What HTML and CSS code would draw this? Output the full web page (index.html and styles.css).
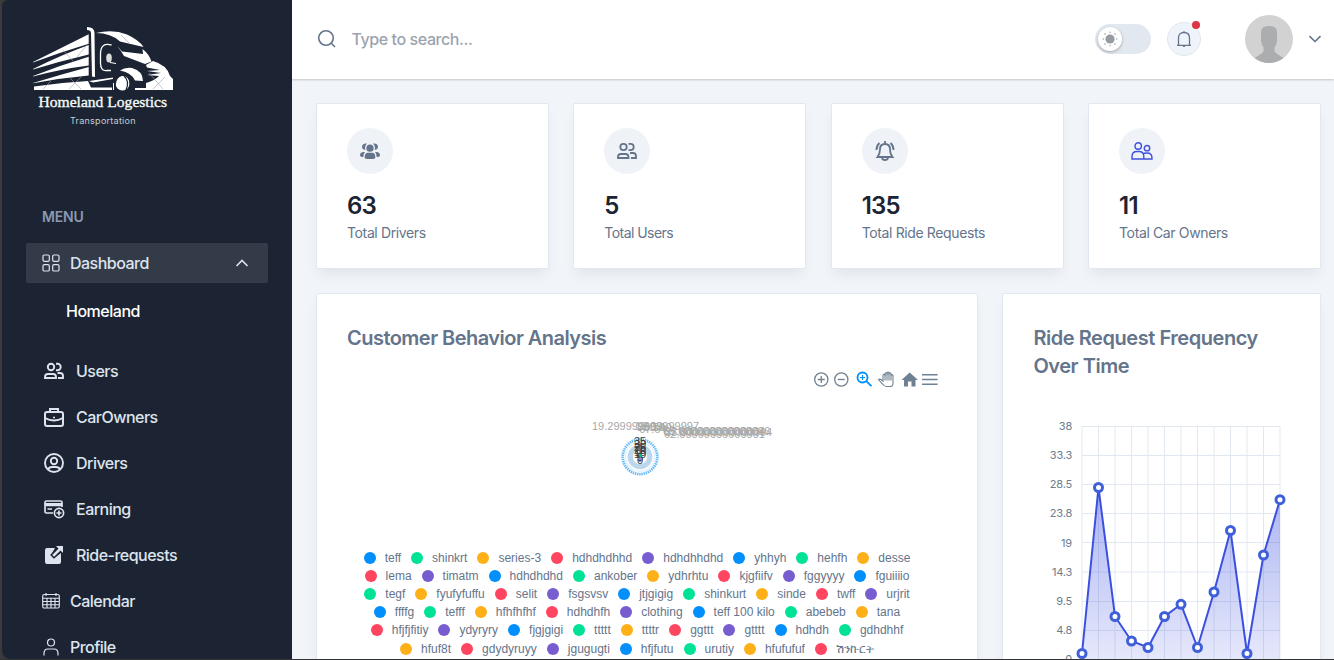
FILE: index.html
```html
<!DOCTYPE html>
<html lang="en">
<head>
<meta charset="utf-8">
<title>Homeland Logestics</title>
<link rel="stylesheet" href="styles.css">
</head>
<body>
<div class="app">
  <aside class="sidebar">
    <svg class="logo" width="144" height="102" viewBox="0 0 144 102">
      <g fill="#fff">
        <path d="M0 35 L55.700 7.300 V16.700 Q28 25 0 35.500Z"/>
        <path d="M0 42 Q28 28 55.700 18 V27.500 Q28 34 0 42.500Z"/>
        <path d="M0 49 Q28 38 55.700 29.700 V38.500 Q28 42 0 49.500Z"/>
        <path d="M0 56 Q28 47.500 55.700 40 V48.500 Q28 51 0 56.300Z"/>
        <path d="M1 59.500 Q28 55.500 55 54 L58 60.500 H79 V63 H1Z"/>
        <path d="M54 0 Q61.500 0 61.500 6 L62 50 L59 49.500 L58 6 Q58 3 54 3Z"/>
        <path d="M63 6 Q80 2 94 7.500 Q106 13 110.500 20 L87 14.500 Q78 6 63 6Z"/>
        <path d="M84 18.500 L89 24.500 L110 27 L109.500 22 Q116 27 118.500 34.500 L112 37 L91 29 Q88 24 84 18.500Z"/>
        <path d="M113 38 L120 34 Q134 38 137 49 L140 52 V63 H113 V56 Q121 54 126 49 L114 48 L128 46 L114 44 L127 43 L114 40.500Z"/>
        <path d="M87 43.500 Q92 40 99 41 Q110 44 110 54 L102 53.500 Q99 46 87 43.500Z"/>
        <path d="M56 54 L80 50.500 V52 L60 55.500Z"/>
        <path d="M102 61 H113 V63 H102Z"/>
        <ellipse cx="89.500" cy="56" rx="7.200" ry="7.500"/>
      </g>
      <path d="M78.500 18 Q67.500 15 67.500 27 V36 Q67.500 44.500 74 43.500 H78" fill="none" stroke="#fff" stroke-width="1.300"/>
      <ellipse cx="76" cy="31" rx="2.800" ry="4.500" fill="#ddd"/>
      <path d="M77 35.500 L83 36.500 M80.500 56 V63" stroke="#fff" stroke-width="1"/>
      <path d="M91 49 Q97 54 93 63" fill="none" stroke="#1c2434" stroke-width="1.200"/>
      <path d="M82 63 Q81 49 90 48 Q99 49 97 63" fill="none" stroke="#1c2434" stroke-width="1.500"/>
      <path d="M10 62 l8-8 M36 50 l12 12 M36 62 l12-12 M30 23 l10 11 M44 30 l10-12 M88 8 l8 8 M116 46 l14 16 M120 62 l12-12" stroke="#9aa0a8" stroke-width=".6"/>
      <text class="logo-name" x="5.500" y="79.500" textLength="128.500" lengthAdjust="spacingAndGlyphs">Homeland Logestics</text>
      <text class="logo-tag" x="37" y="96.500" textLength="65.500" lengthAdjust="spacing">Transportation</text>
    </svg>
    <h3 class="menu-title">MENU</h3>
    <nav class="menu">
      <a class="item active">
        <svg width="18" height="18" viewBox="0 0 18 18" fill="none" stroke="currentColor" stroke-width="1.200"><rect x="1" y="1" width="6.300" height="6.300" rx="1.300"/><rect x="10.700" y="1" width="6.300" height="6.300" rx="1.300"/><rect x="1" y="10.700" width="6.300" height="6.300" rx="1.300"/><rect x="10.700" y="10.700" width="6.300" height="6.300" rx="1.300"/></svg>
        <span class="t-dash">Dashboard</span>
        <svg class="chev" width="14" height="8" viewBox="0 0 14 8" fill="none" stroke="currentColor" stroke-width="1.600"><path d="M1.500 7 L7 1.500 L12.500 7"/></svg>
      </a>
      <a class="sub">Homeland</a>
      <a class="item wide">
        <svg width="24" height="24" viewBox="0 0 24 24" fill="none" stroke="currentColor" stroke-width="1.900"><circle cx="9" cy="8" r="3.200"/><path d="M14 4.800 h1.500 a3.200 3.200 0 0 1 0 6.400 h-1.500 M3 19 v-1 a3 3 0 0 1 3-3 h5 a3 3 0 0 1 3 3 v1 z M15.500 14 h2.500 a3 3 0 0 1 3 3 V19 h-5"/></svg>
        <span>Users</span></a>
      <a class="item wide">
        <svg width="24" height="24" viewBox="0 0 24 24" fill="none" stroke="currentColor" stroke-width="2"><rect x="3" y="7" width="18" height="14" rx="2"/><path d="M8 7 V4 h8 V7 M3 13 Q12 18 21 13"/><path d="M11 12.500 h2" stroke-width="1.500"/></svg>
        <span>CarOwners</span></a>
      <a class="item wide">
        <svg width="24" height="24" viewBox="0 0 24 24" fill="none" stroke="currentColor" stroke-width="1.900"><circle cx="12" cy="12" r="9"/><circle cx="12" cy="10" r="3.200"/><path d="M6.200 18.500 Q7 16 10 16 h4 Q17 16 17.800 18.500"/></svg>
        <span>Drivers</span></a>
      <a class="item wide">
        <svg width="24" height="24" viewBox="0 0 24 24" fill="none" stroke="currentColor" stroke-width="1.700"><path d="M11 16 H4.500 Q3 16 3 14.500 V5.500 Q3 4 4.500 4 h14 Q20 4 20 5.500 V10 M3 8.500 H20 M5.500 12 H10"/><path d="M3 7 H20" stroke-width="2"/><circle cx="17" cy="16" r="4.600"/><path d="M14.500 16 h5 M17 13.500 v5"/></svg>
        <span>Earning</span></a>
      <a class="item wide">
        <svg width="24" height="24" viewBox="0 0 24 24"><path fill="currentColor" d="M5 5 H13 L9 12 L12 15 L19 10 V19 Q19 21 17 21 H5 Q3 21 3 19 V7 Q3 5 5 5Z M14 3 H21 V10 L18.500 7.500 L12 14 L10 12 L16.500 5.500Z"/><path d="M12 3 L15 6 L9 12 L12 15 L18.500 9 L21 11" fill="none" stroke="#1c2434" stroke-width="1.200"/></svg>
        <span>Ride-requests</span></a>
      <a class="item">
        <svg width="18" height="18" viewBox="0 0 18 18" fill="none" stroke="currentColor" stroke-width="1.150"><rect x=".7" y="2.500" width="16.600" height="13.500" rx="1.500"/><path d="M.7 6.200 H17.300 M.7 9.500 H17.300 M.7 12.700 H17.300 M5 6.200 V16 M9 6.200 V16 M13 6.200 V16 M4 1 V4 M14 1 V4"/></svg>
        <span>Calendar</span></a>
      <a class="item">
        <svg width="18" height="18" viewBox="0 0 18 18" fill="none" stroke="currentColor" stroke-width="1.200"><circle cx="9" cy="4.500" r="3.500"/><path d="M2 17.500 V15.500 Q2 11 6 11 H12 Q16 11 16 15.500 V17.500"/></svg>
        <span>Profile</span></a>
    </nav>
  </aside>

  <div class="content">
    <header class="topbar">
      <svg class="search-icon" width="20" height="20" viewBox="0 0 20 20" fill="none" stroke="#64748b" stroke-width="1.600"><circle cx="9" cy="9" r="7.300"/><path d="M14.300 14.300 L18 18"/></svg>
      <span class="search">Type to search...</span>
      <div class="switch"><span class="knob"><svg width="16" height="16" viewBox="0 0 16 16" fill="#969aa1"><circle cx="8" cy="8" r="4.600"/><g><circle cx="8" cy="1.300" r=".7"/><circle cx="8" cy="14.700" r=".7"/><circle cx="1.300" cy="8" r=".7"/><circle cx="14.700" cy="8" r=".7"/><circle cx="3" cy="3" r=".8"/><circle cx="13" cy="3" r=".8"/><circle cx="3" cy="13" r=".8"/><circle cx="13" cy="13" r=".8"/></g></svg></span></div>
      <div class="bell"><svg width="18" height="18" viewBox="0 0 18 18" fill="none" stroke="#64748b" stroke-width="1.300"><path d="M3.500 15 V8 Q3.500 2.500 9 2.500 Q14.500 2.500 14.500 8 V15 M2 15.300 H16 M9 1 V2.500 M8 16.400 H10"/></svg><i class="dot"></i></div>
      <svg class="avatar" width="48" height="48" viewBox="0 0 48 48"><circle cx="24" cy="24" r="24" fill="#d2d2d2"/><path fill="#acadaf" d="M16 17 Q16 11 24 11 Q32 11 32 17 V26 Q31 31 29.500 32 V36 Q30 38 38.500 43 Q32 48 24 48 Q16 48 9.500 43 Q18 38 18.500 36 V32 Q17 31 16 26Z"/></svg>
      <svg class="caret" width="14" height="8" viewBox="0 0 14 8" fill="none" stroke="#64748b" stroke-width="1.600"><path d="M1.500 1.200 L7 6.500 L12.500 1.200"/></svg>
    </header>

    <main class="main">
      <section class="stats">
        <article class="card stat"><div class="badge"><svg width="22" height="22" viewBox="0 0 22 22" fill="#64748b"><circle cx="11" cy="8.200" r="3.600"/><path d="M5.700 17.500 Q5.500 12.800 9 12.800 H13 Q16.500 12.800 16.300 17.500 Q16 19 14 19 H8 Q6 19 5.700 17.500Z"/><path d="M8 3.500 Q6 5 6 8 Q6 9 6.500 10 Q3 9.500 3 6.500 Q3.500 3 8 3.500Z M14 3.500 Q16 5 16 8 Q16 9 15.500 10 Q19 9.500 19 6.500 Q18.500 3 14 3.500Z M6 12 Q4.500 13.500 4.300 17 Q1 17 1 15 Q1.200 11.500 6 12Z M16 12 Q17.500 13.500 17.700 17 Q21 17 21 15 Q20.800 11.500 16 12Z"/></svg></div><h4>63</h4><p>Total Drivers</p></article>
        <article class="card stat"><div class="badge"><svg width="24" height="24" viewBox="0 0 24 24" fill="none" stroke="#64748b" stroke-width="1.800"><circle cx="8.500" cy="8" r="3.200"/><path d="M13.500 4.800 h2 a3.200 3.200 0 0 1 0 6.400 h-2 M3 19 v-1 a3 3 0 0 1 3-3 h4.500 a3 3 0 0 1 3 3 v1 z M15 14 h3 a3 3 0 0 1 3 3 V19 h-5"/></svg></div><h4>5</h4><p class="t-users">Total Users</p></article>
        <article class="card stat"><div class="badge"><svg width="24" height="24" viewBox="0 0 24 24" fill="none" stroke="#64748b" stroke-width="1.800"><path d="M12 2 V5 M4.500 18 Q7 15 7 10.500 Q7 5 12 5 Q17 5 17 10.500 Q17 15 19.500 18Z M9 19 Q9.500 21 12 21 Q14.500 21 15 19 M6.500 4 Q3.500 6.500 3.500 11 M17.500 4 Q20.500 6.500 20.500 11"/></svg></div><h4>135</h4><p>Total Ride Requests</p></article>
        <article class="card stat"><div class="badge"><svg width="22" height="18" viewBox="0 0 22 18" fill="none" stroke="#3c50e0" stroke-width="1.400"><circle cx="7.200" cy="4" r="3.200"/><circle cx="16" cy="6.200" r="2.700"/><path d="M1 17 V14.500 Q1 9.500 6 9.500 H8 Q12.500 9.500 12.800 14 V17Z M12 12 Q13 11 16 11 Q21 11 21 16 V17 H12.800"/></svg></div><h4>11</h4><p>Total Car Owners</p></article>
      </section>

      <section class="panels">
        <article class="card panel">
          <h5 class="t-cust">Customer Behavior Analysis</h5>
          <svg class="radar" width="600" height="180" viewBox="347 362 600 180">
            <g fill="none" stroke="#6e8192" stroke-width="1.300"><circle cx="821.300" cy="379.500" r="6.600"/><path d="M817.800 379.500 h7 M821.300 376 v7"/><circle cx="841.300" cy="379.500" r="6.600"/><path d="M837.800 379.500 h7"/></g>
            <g fill="none" stroke="#008ffb" stroke-width="1.800"><circle cx="862.500" cy="377.500" r="5"/><path d="M866.200 381.200 L871.500 386.200"/><path d="M860 377.500 h5 M862.500 375 v5" stroke-width="1.200"/></g>
            <path d="M882.500 384 q-2.500-2.500 -4-4.500 q1.500-1.200 4.500 1.500 v-6 q1-1.500 2 0 v-1.500 q1-1.500 2 0 v-.8 q1-1 2 0 v.8 q1-1.500 2 0 v1.500 q1.200-1 2 .5 v7.500 q0 3.500-2.500 3.500 h-4 q-2 0-4-2.500Z" fill="#fff" stroke="#6e8192" stroke-width="1.100"/>
            <path d="M885 374 v6.500 M887 373 v7.500 M889 373 v7.500 M891 374.500 v6" stroke="#6e8192" stroke-width="1.100"/>
            <path d="M909.700 372.500 L918 380 H915.500 V386.500 H911.500 V381.500 H908 V386.500 H904 V380 H901.500Z" fill="#6e8192"/>
            <path d="M922 374.800 h15.600 M922 379.500 h15.600 M922 384.200 h15.600" stroke="#6e8192" stroke-width="1.500"/>
            <circle cx="640" cy="456.800" r="17.300" fill="#fff" stroke="#66b9f8" stroke-width="2.800" stroke-dasharray="1.400 .8"/>
            <circle cx="640" cy="456.800" r="14.500" fill="none" stroke="#e3f2fd" stroke-width="1.500"/>
            <circle cx="640" cy="456.800" r="9.800" fill="none" stroke="#bcd6ec" stroke-width="5.200"/>
            <path d="M640 444 V462" stroke="#775dd0" stroke-width="1.500"/>
            <g class="tick">
              <text x="592" y="430">19.299999999999997</text>
              <text x="635" y="430">19.09</text><text x="637" y="431">38.56</text><text x="639" y="433">67.64</text>
              <text x="644" y="431">50.40</text><text x="663" y="435">65.600000000000006</text><text x="664" y="437.500">62.00000000000001</text><text x="665" y="436">33.800000000000004</text><text x="664" y="435">57.00000000000004</text>
            </g>
            <g class="ytick">
              <text x="640" y="445">35</text><text x="640" y="448">30</text><text x="640" y="451">25</text><text x="640" y="454">20</text><text x="640" y="456">15</text><text x="640" y="458">10</text><text x="640" y="461">5</text><text x="640" y="463.500">0</text>
            </g>
            <circle cx="640.500" cy="455.500" r="1.500" fill="#00c27c"/>
          </svg>
          <div class="legend">
            <div><span class="b">teff</span><span class="g">shinkrt</span><span class="y">series-3</span><span class="r">hdhdhdhhd</span><span class="p">hdhdhhdhd</span><span class="b">yhhyh</span><span class="g">hehfh</span><span class="y">desse</span></div>
            <div><span class="r">lema</span><span class="p">timatm</span><span class="b">hdhdhdhd</span><span class="g">ankober</span><span class="y">ydhrhtu</span><span class="r">kjgfiifv</span><span class="p">fggyyyy</span><span class="b">fguiiiio</span></div>
            <div><span class="g">tegf</span><span class="y">fyufyfuffu</span><span class="r">selit</span><span class="p">fsgsvsv</span><span class="b">jtjgigig</span><span class="g">shinkurt</span><span class="y">sinde</span><span class="r">twff</span><span class="p">urjrit</span></div>
            <div><span class="b">ffffg</span><span class="g">tefff</span><span class="y">hfhfhfhf</span><span class="r">hdhdhfh</span><span class="p">clothing</span><span class="b">teff 100 kilo</span><span class="g">abebeb</span><span class="y">tana</span></div>
            <div><span class="r">hfjfjfitiy</span><span class="p">ydyryry</span><span class="b">fjgjgigi</span><span class="g">ttttt</span><span class="y">ttttr</span><span class="r">ggttt</span><span class="p">gtttt</span><span class="b">hdhdh</span><span class="g">gdhdhhf</span></div>
            <div class="last"><span class="y">hfuf8t</span><span class="r">gdydyruyy</span><span class="p">jgugugti</span><span class="b">hfjfutu</span><span class="g">urutiy</span><span class="y">hfufufuf</span><span class="r">ሽንኩርት</span></div>
          </div>
        </article>
        <article class="card panel">
          <h5 class="t-ride">Ride Request Frequency<br>Over Time</h5>
          <svg class="area" width="256" height="250" viewBox="1033 415 256 250">
            <defs><linearGradient id="fill" x1="0" y1="487" x2="0" y2="660" gradientUnits="userSpaceOnUse"><stop offset="0" stop-color="#3c50e0" stop-opacity=".43"/><stop offset="1" stop-color="#3c50e0" stop-opacity=".13"/></linearGradient></defs>
            <path class="grid" d="M1082 426.500H1280M1082 455.500H1280M1082 484.500H1280M1082 513.500H1280M1082 542.500H1280M1082 572H1280M1082 601.500H1280M1082 630.500H1280M1082 426V660M1098.500 426V660M1115 426V660M1131.500 426V660M1148 426V660M1164.500 426V660M1181 426V660M1197.500 426V660M1214 426V660M1230.500 426V660M1247 426V660M1263.500 426V660M1280 426V660"/>
            <path fill="url(#fill)" d="M1082 653.500L1098.500 487.500L1115 616.500L1131.500 641L1148 647.500L1164.500 616.500L1181 604.300L1197.500 647.500L1214 592L1230.500 530.500L1247 653.500L1263.500 555L1280 499.700V660H1082Z"/>
            <path class="line" d="M1082 653.500L1098.500 487.500L1115 616.500L1131.500 641L1148 647.500L1164.500 616.500L1181 604.300L1197.500 647.500L1214 592L1230.500 530.500L1247 653.500L1263.500 555L1280 499.700"/>
            <g class="pts"><circle cx="1082" cy="653.500" r="4"/><circle cx="1098.500" cy="487.500" r="4"/><circle cx="1115" cy="616.500" r="4"/><circle cx="1131.500" cy="641" r="4"/><circle cx="1148" cy="647.500" r="4"/><circle cx="1164.500" cy="616.500" r="4"/><circle cx="1181" cy="604.300" r="4"/><circle cx="1197.500" cy="647.500" r="4"/><circle cx="1214" cy="592" r="4"/><circle cx="1230.500" cy="530.500" r="4"/><circle cx="1247" cy="653.500" r="4"/><circle cx="1263.500" cy="555" r="4"/><circle cx="1280" cy="499.700" r="4"/></g>
            <g class="axis"><text x="1072" y="430">38</text><text x="1072" y="459">33.3</text><text x="1072" y="488">28.5</text><text x="1072" y="517">23.8</text><text x="1072" y="546.500">19</text><text x="1072" y="575.500">14.3</text><text x="1072" y="604.500">9.5</text><text x="1072" y="634">4.8</text><text x="1072" y="663">0</text></g>
          </svg>
        </article>
      </section>
    </main>
  </div>
</div>
</body>
</html>
```
FILE: styles.css
```css
* { box-sizing: border-box; }
body { margin: 0; font-family: Inter, "Liberation Sans", sans-serif; background: #3a3a3a; }
h3, h4, h5, p { margin: 0; }
svg { display: block; flex: none; }
.app { display: flex; height: 660px; overflow: hidden; border-left: 2px solid #3a3a3a; border-bottom: 1px solid #333438; }
.sidebar { width: 290px; flex: none; background: #1c2434; color: #dee4ee; border-radius: 6px 0 0 8px; overflow: hidden; }
.logo { margin: 27px 0 0 31px; }
.logo-name { font: 15.5px "Liberation Serif", serif; fill: #f4fbf8; stroke: #f4fbf8; stroke-width: .35px; }
.logo-tag { font: 9px Inter, sans-serif; fill: #c5cfd2; }
.menu-title { margin: 78px 0 0 40px; font-size: 14px; line-height: 20px; font-weight: 600; letter-spacing: -.2px; color: #8a99af; }
.menu { margin: 16px 24px 0; display: flex; flex-direction: column; }
.item { display: flex; align-items: center; gap: 10px; height: 40px; margin-bottom: 6px; padding: 0 16px; font-size: 16px; font-weight: 500; letter-spacing: -.52px; flex: none; }
.item.active { background: #333a48; border-radius: 2px; margin-bottom: 0; }
.chev { margin-left: auto; margin-right: 3px; }
.sub { height: 68px; padding: 18px 0 0 40px; font-size: 16px; line-height: 21px; font-weight: 500; letter-spacing: -.48px; color: #fff; }
.content { flex: 1; display: flex; flex-direction: column; background: #f1f5f9; min-width: 0; }
.topbar { height: 79px; flex: none; display: flex; align-items: center; padding: 0 13px 2px 24.500px; background: #fff; box-shadow: 0 1px 2px rgba(0,0,0,.2); }
.search { margin-left: 15px; font-size: 16px; letter-spacing: -.42px; font-weight: 500; color: #9ca3af; }
.switch { margin-left: auto; width: 56px; height: 30px; border-radius: 15px; background: #e2e8f0; padding: 3px; }
.knob { display: flex; align-items: center; justify-content: center; width: 24px; height: 24px; border-radius: 50%; background: #fff; box-shadow: 0 1px 3px rgba(0,0,0,.3); }
.bell { position: relative; margin-left: 16px; width: 34px; height: 34px; border: 1px solid #e2e8f0; border-radius: 50%; background: #eff4fb; display: flex; align-items: center; justify-content: center; }
.dot { position: absolute; top: -2px; right: 0; width: 8px; height: 8px; border-radius: 50%; background: #dc3545; }
.avatar { margin-left: 44px; }
.caret { margin-left: 15px; margin-right: -1px; }
.main { padding: 24px 13px 0 24px; display: flex; flex-direction: column; gap: 24px; }
.stats { display: grid; grid-template-columns: repeat(4, 1fr); gap: 24.4px; }
.card { background: #fff; border: 1px solid #e2e8f0; border-radius: 2px; box-shadow: 0 8px 13px -3px rgba(0,0,0,.07); }
.stat { height: 166px; padding: 24px 30px; }
.badge { width: 46px; height: 46px; border-radius: 50%; background: #eff2f7; display: flex; align-items: center; justify-content: center; }
.stat h4 { margin-top: 17px; font-size: 24px; line-height: 30px; font-weight: 600; letter-spacing: -.8px; color: #1c2434; }
.stat p { margin-top: 1px; font-size: 14px; line-height: 21px; letter-spacing: -.37px; color: #64748b; }
.stat .t-users { letter-spacing: -.55px; }
.panels { display: grid; grid-template-columns: 662px minmax(0, 1fr); gap: 24.400px; }
.panel { height: 420px; padding: 30px; }
.panel h5 { font-size: 20px; line-height: 28px; font-weight: 600; letter-spacing: -.53px; color: #64748b; white-space: nowrap; }
.panel .t-ride { letter-spacing: -.45px; }
.radar { margin-top: 10px; }
.tick { font: 11px "Liberation Sans", Arial, sans-serif; fill: #a8a8a8; }
.ytick { font: 11px "Liberation Sans", Arial, sans-serif; fill: #373d3f; text-anchor: middle; }
.legend { width: 600px; margin: 7px 0 0 -10px; font: 12px/18px "Liberation Sans", Arial, sans-serif; color: #64748b; }
.legend div { display: flex; justify-content: center; gap: 10px; height: 18px; white-space: nowrap; }
.legend .last { margin-top: 1px; }
.legend span { display: flex; align-items: center; gap: 9px; }
.legend span::before { content: ""; width: 12px; height: 12px; border-radius: 50%; background: currentColor; }
.b::before { color: #008ffb; }
.g::before { color: #00e396; }
.y::before { color: #feb019; }
.r::before { color: #ff4560; }
.p::before { color: #775dd0; }
.area { margin-top: 35px; }
.grid { fill: none; stroke: #e2e8f0; stroke-width: 1; }
.line { fill: none; stroke: #3c50e0; stroke-width: 2; }
.pts { fill: #fff; stroke: #3f60d8; stroke-width: 3; }
.axis { font: 11px Inter, sans-serif; letter-spacing: -.2px; fill: #6b7d8e; text-anchor: end; }
```
